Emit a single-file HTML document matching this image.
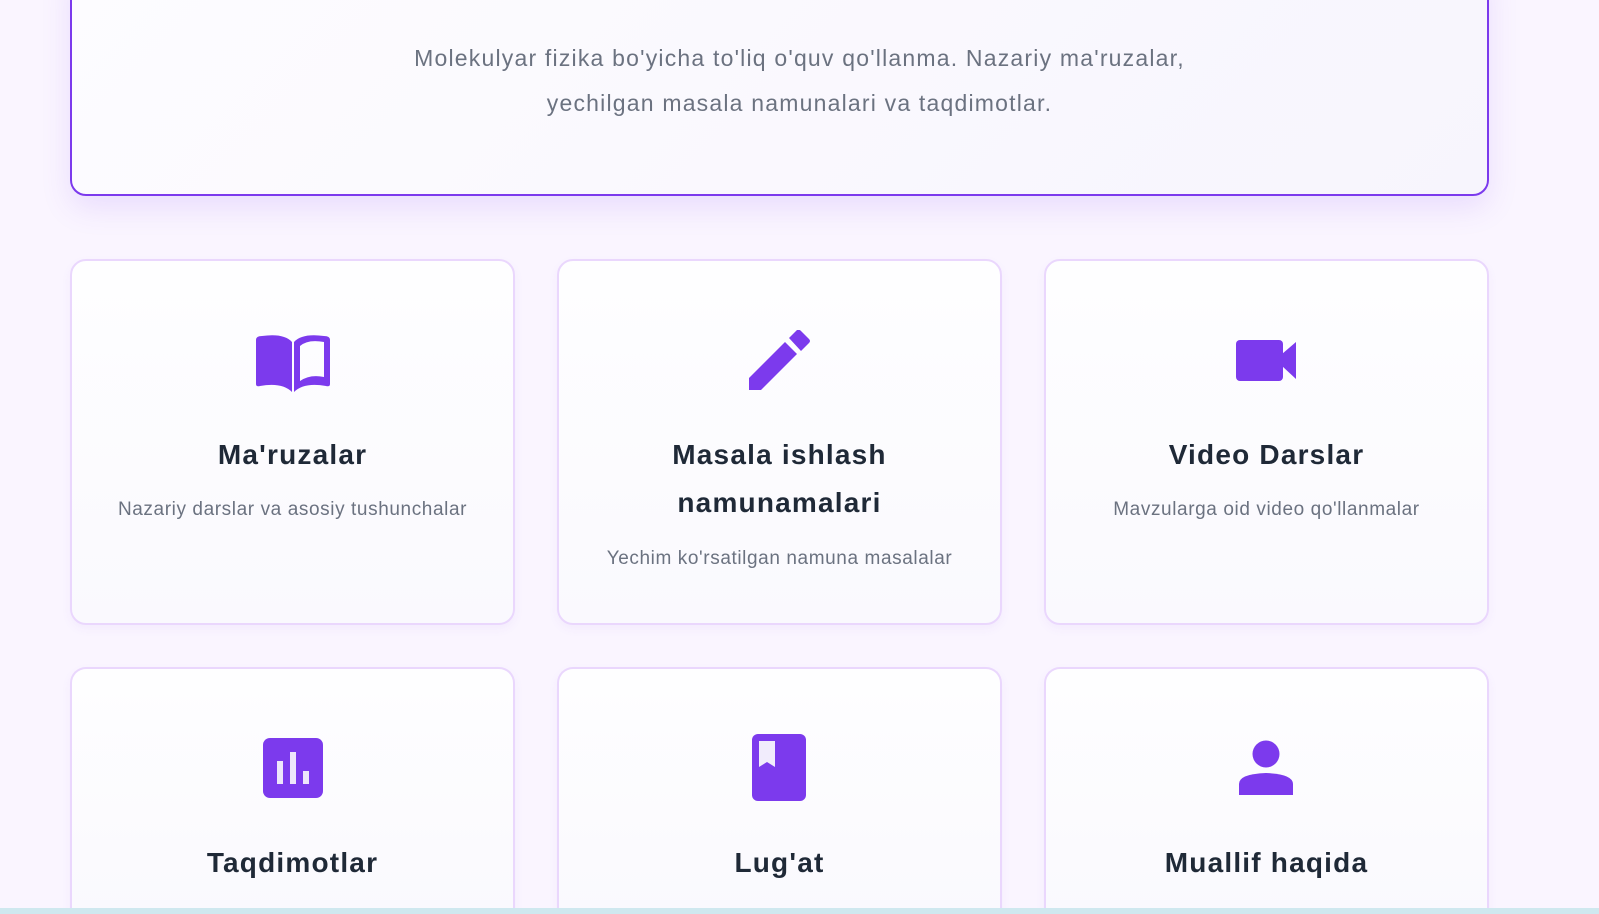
<!DOCTYPE html>
<html><head><meta charset="utf-8"><style>
*{margin:0;padding:0;box-sizing:border-box}
html,body{width:1599px;height:914px;overflow:hidden}
body{background:#faf5ff;font-family:"Liberation Sans",sans-serif;position:relative}
.hero{position:absolute;left:70px;top:-40px;width:1419px;height:236px;border:2px solid #7c3aed;border-radius:16px;background:linear-gradient(135deg,#fdfcff,#f7f5fd);box-shadow:0 12px 30px rgba(124,58,237,.13)}
.ht{position:absolute;left:0;width:1599px;text-align:center;color:#6b7280;font-size:23px;letter-spacing:1.2px}
.card{position:absolute;width:445px;height:366px;border:2px solid #ead7fd;border-radius:16px;background:linear-gradient(180deg,#fefeff,#faf9fe);box-shadow:0 4px 10px rgba(124,58,237,.05)}
.t{position:absolute;text-align:center;font-weight:bold;font-size:28px;letter-spacing:1.2px;color:#1f2937;width:445px;line-height:48px}
.d{position:absolute;text-align:center;font-size:19px;letter-spacing:0.6px;color:#6b7280;width:445px;line-height:24px}
svg{position:absolute;fill:#7c3aed}
.strip{position:absolute;left:0;top:908px;width:1599px;height:6px;background:#cfe8ef}
</style></head><body>
<div class="hero"></div>
<div class="ht" style="top:45px">Molekulyar fizika bo'yicha to'liq o'quv qo'llanma. Nazariy ma'ruzalar,</div>
<div class="ht" style="top:90px">yechilgan masala namunalari va taqdimotlar.</div>

<div class="card" style="left:70px;top:259px"></div>
<div class="card" style="left:557px;top:259px"></div>
<div class="card" style="left:1044px;top:259px"></div>
<div class="card" style="left:70px;top:667px;height:247px;border-bottom:none;border-radius:16px 16px 0 0"></div>
<div class="card" style="left:557px;top:667px;height:247px;border-bottom:none;border-radius:16px 16px 0 0"></div>
<div class="card" style="left:1044px;top:667px;height:247px;border-bottom:none;border-radius:16px 16px 0 0"></div>

<svg style="left:256px;top:334px" width="74" height="58" viewBox="0 0 74 58"><path d="M0 6Q0 2 6 2Q28 -1 36 8L36 58Q26 48 4 52Q0 53 0 50Z"/><path d="M38 8Q46 -1 68 2Q74 2 74 6L74 50Q74 53 70 52Q48 48 38 58ZM44 12L44 47Q54 40 68 43L68 8Q52 5 44 12Z"/></svg>
<svg style="left:749px;top:330px" width="62" height="60" viewBox="0 0 62 60"><path d="M0 48L36 12L48 24L12 60L0 60Z"/><path d="M40 8L48 0Q50 -1 52 1L60 9Q62 11 60 13L52 21Z"/></svg>
<svg style="left:1236px;top:340px" width="61" height="41" viewBox="0 0 61 41"><rect x="0" y="0" width="47" height="41" rx="4"/><path d="M46 14L60 2L60 39L46 26Z"/></svg>

<svg style="left:263px;top:738px" width="60" height="60" viewBox="0 0 60 60"><rect width="60" height="60" rx="7"/><rect x="14" y="23" width="6" height="23" fill="#ede6fb"/><rect x="27" y="14" width="6" height="32" fill="#ede6fb"/><rect x="40" y="33" width="6" height="13" fill="#ede6fb"/></svg>
<svg style="left:752px;top:734px" width="54" height="67" viewBox="0 0 54 67"><rect width="54" height="67" rx="6"/><path d="M7 7L23 7L23 33L15 28L7 33Z" fill="#f1ecfc"/></svg>
<svg style="left:1239px;top:740px" width="54" height="56" viewBox="0 0 54 56"><circle cx="27" cy="14" r="13.5"/><path d="M0 44Q0 34 27 33Q54 34 54 44L54 55L0 55Z"/></svg>

<div class="t" style="left:70px;top:431px">Ma'ruzalar</div>
<div class="d" style="left:70px;top:498px">Nazariy darslar va asosiy tushunchalar</div>
<div class="t" style="left:557px;top:431px">Masala ishlash<br>namunamalari</div>
<div class="d" style="left:557px;top:547px">Yechim ko'rsatilgan namuna masalalar</div>
<div class="t" style="left:1044px;top:431px">Video Darslar</div>
<div class="d" style="left:1044px;top:498px">Mavzularga oid video qo'llanmalar</div>
<div class="t" style="left:70px;top:839px">Taqdimotlar</div>
<div class="t" style="left:557px;top:839px">Lug'at</div>
<div class="t" style="left:1044px;top:839px">Muallif haqida</div>
<div class="strip"></div>
</body></html>
